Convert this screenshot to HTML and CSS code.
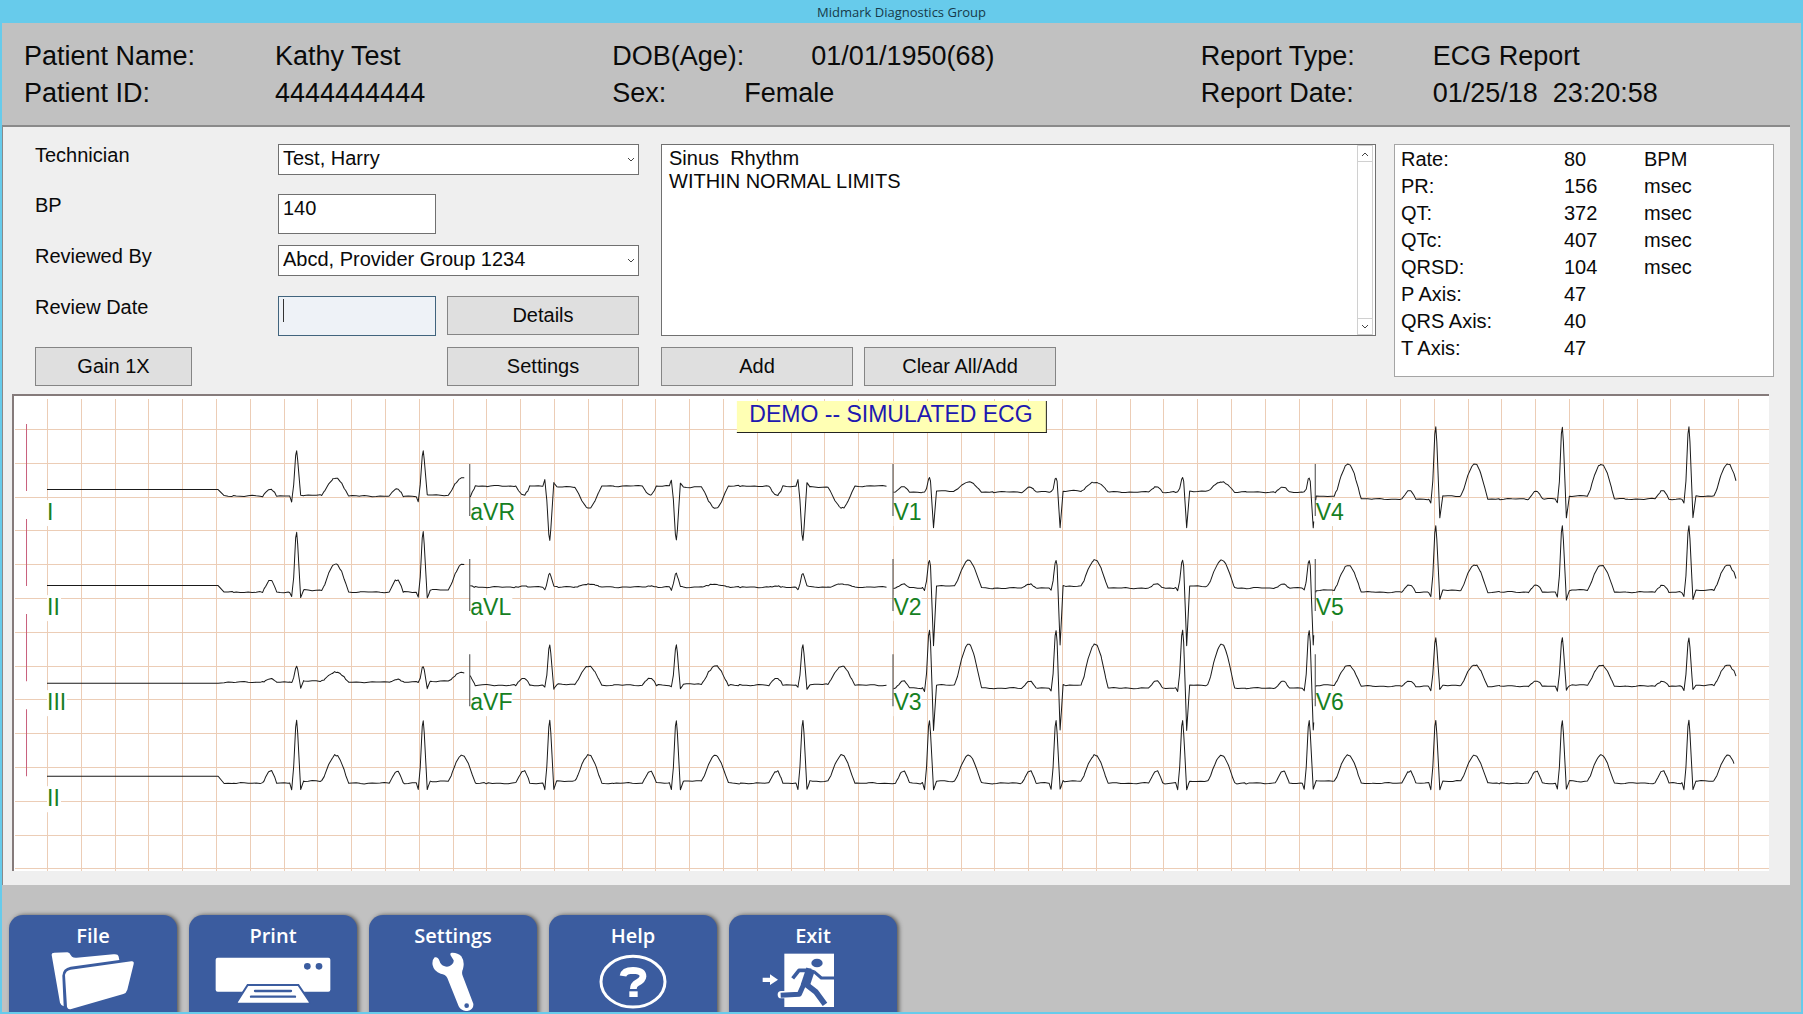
FILE: index.html
```html
<!DOCTYPE html>
<html lang="en">
<head>
  <meta charset="UTF-8">
  <meta name="viewport" content="width=device-width, initial-scale=1.0">
  <title>Midmark Diagnostics Group</title>
  <link rel="stylesheet" href="styles.css">
</head>
<body>
  <div class="window">
    <div class="title-bar">Midmark Diagnostics Group</div>

    <header class="patient-bar">
      <dl class="patient-group">
        <div><dt>Patient Name:</dt><dd>Kathy Test</dd></div>
        <div><dt>Patient ID:</dt><dd>4444444444</dd></div>
      </dl>
      <dl class="patient-group">
        <div><dt class="dob">DOB(Age):</dt><dd>01/01/1950(68)</dd></div>
        <div><dt class="sex">Sex:</dt><dd>Female</dd></div>
      </dl>
      <dl class="patient-group">
        <div><dt class="report">Report Type:</dt><dd>ECG Report</dd></div>
        <div><dt class="report">Report Date:</dt><dd>01/25/18  23:20:58</dd></div>
      </dl>
    </header>

    <main class="panel">
      <div class="panel-top">
        <form class="review-form">
          <label for="technician">Technician</label>
          <div class="select-wrap">
            <select id="technician"><option>Test, Harry</option></select>
            <svg width="8" height="6" viewBox="0 0 8 6"><path d="M1 1l3 3 3-3"/></svg>
          </div>

          <label for="bp">BP</label>
          <div class="field-row"><input type="text" id="bp" value="140"></div>

          <label for="reviewer">Reviewed By</label>
          <div class="select-wrap">
            <select id="reviewer"><option>Abcd, Provider Group 1234</option></select>
            <svg width="8" height="6" viewBox="0 0 8 6"><path d="M1 1l3 3 3-3"/></svg>
          </div>

          <label for="review-date">Review Date</label>
          <div class="field-row active">
            <input type="text" id="review-date">
            <button type="button" class="btn">Details</button>
          </div>

          <button type="button" class="btn gain">Gain 1X</button>
          <div class="field-row end"><button type="button" class="btn">Settings</button></div>
        </form>

        <section class="statements">
          <div class="memo">
            <textarea aria-label="Interpretation">Sinus  Rhythm
WITHIN NORMAL LIMITS</textarea>
            <div class="scrollbar">
              <button type="button" aria-label="Scroll up"><svg width="8" height="6" viewBox="0 0 8 6"><path d="M1 5l3-3 3 3"/></svg></button>
              <button type="button" aria-label="Scroll down"><svg width="8" height="6" viewBox="0 0 8 6"><path d="M1 1l3 3 3-3"/></svg></button>
            </div>
          </div>
          <div class="statement-buttons">
            <button type="button" class="btn">Add</button>
            <button type="button" class="btn">Clear All/Add</button>
          </div>
        </section>

        <div class="stats">
          <table>
            <tr><th scope="row">Rate:</th><td>80</td><td>BPM</td></tr>
            <tr><th scope="row">PR:</th><td>156</td><td>msec</td></tr>
            <tr><th scope="row">QT:</th><td>372</td><td>msec</td></tr>
            <tr><th scope="row">QTc:</th><td>407</td><td>msec</td></tr>
            <tr><th scope="row">QRSD:</th><td>104</td><td>msec</td></tr>
            <tr><th scope="row">P Axis:</th><td>47</td><td></td></tr>
            <tr><th scope="row">QRS Axis:</th><td>40</td><td></td></tr>
            <tr><th scope="row">T Axis:</th><td>47</td><td></td></tr>
          </table>
        </div>
      </div>

      <div class="chart">
        <svg id="ecg" viewBox="0 0 1754 475"></svg>
        <div class="demo-badge">DEMO -- SIMULATED ECG</div>
      </div>
    </main>

    <nav class="toolbar">
      <button type="button" class="tile">
        <span>File</span>
        <svg width="86" height="60" viewBox="0 0 258 180">
          <path fill="#fff" d="M5 12Q5 5 13 5L52 4Q59 5 62 12L66 17Q71 21 80 20L190 10Q204 8 206 17L208 27 62 47Q38 52 37 74L41 166Q33 163 30 155Z"/>
          <path fill="#fff" d="M45 72Q47 59 62 56L244 31Q253 30 251 39L232 116Q229 126 220 129L64 174Q54 177 51 168Z"/>
        </svg>
      </button>
      <button type="button" class="tile">
        <span>Print</span>
        <svg width="116" height="60" viewBox="0 0 348 180">
          <rect x="2" y="20" width="344" height="102" rx="6" fill="#fff"/>
          <circle cx="277" cy="46" r="10" fill="#3b5c9f"/>
          <circle cx="312" cy="46" r="10" fill="#3b5c9f"/>
          <path fill="#fff" stroke="#3b5c9f" stroke-width="6" d="M98 102H250L284 152Q286 158 280 158H70Q64 158 66 152Z"/>
          <path stroke="#3b5c9f" stroke-width="7" stroke-linecap="round" d="M120 120H228M108 137H240"/>
        </svg>
      </button>
      <button type="button" class="tile">
        <span>Settings</span>
        <svg width="46" height="60" viewBox="90 122 138 180">
          <path fill="#fff" d="M104 141Q95 150 98 165 102 184 122 190 136 191 142 203L176 288Q184 303 202 302 222 298 220 280L188 196Q184 186 189 176 195 154 184 138 173 126 155 127 148 128 153 137L161 150Q162 158 154 164 144 172 132 167 121 163 119 153 114 138 104 141Z"/>
          <circle cx="200" cy="286" r="7" fill="#3b5c9f"/>
        </svg>
      </button>
      <button type="button" class="tile">
        <span>Help</span>
        <svg width="68" height="60" viewBox="0 0 204 180">
          <ellipse cx="102" cy="92" rx="96" ry="76" fill="none" stroke="#fff" stroke-width="9"/>
          <path fill="none" stroke="#fff" stroke-width="20" d="M72 75Q75 58 102 58 132 59 132 76 131 87 115 95 103 102 103 114"/>
          <rect x="91" y="121" width="25" height="17" fill="#fff"/>
        </svg>
      </button>
      <button type="button" class="tile">
        <span>Exit</span>
        <svg width="102" height="60" viewBox="0 0 306 180">
          <path fill="#fff" d="M2 80H24V70L48 86 24 102V93H2Z"/>
          <rect x="67" y="8" width="149" height="160" fill="#fff"/>
          <g fill="none" stroke-linejoin="round">
            <path stroke="#fff" stroke-width="22" stroke-linecap="round" d="M58 131H74"/>
            <g stroke="#3b5c9f">
              <path stroke-width="11" d="M92 82L111 58H148"/>
              <path stroke-width="27" d="M146 54L129 105"/>
              <path stroke-width="15" d="M126 98L112 130 56 133"/>
              <path stroke-width="17" d="M130 98L161 122 189 160"/>
              <path stroke-width="9" d="M156 62L178 81H217"/>
            </g>
          </g>
          <ellipse cx="165" cy="36" rx="17" ry="13" fill="#3b5c9f"/>
        </svg>
      </button>
    </nav>
  </div>
  <script src="ecg.js"></script>
</body>
</html>
```
FILE: styles.css
```css
* {
  box-sizing: border-box;
}

body {
  margin: 0;
  font-family: "Liberation Sans", Arial, sans-serif;
  font-size: 20px;
  line-height: 23px;
  color: #0a0a0a;
}

button,
input,
select,
textarea {
  font: inherit;
  color: inherit;
}

.window {
  display: flex;
  flex-direction: column;
  height: 100vh;
  overflow: hidden;
  background: #c1c1c1;
  border: 2px solid #67cbeb;
  border-top: none;
}

.title-bar {
  flex: none;
  height: 23px;
  background: #67cbeb;
  font-family: "Open Sans", "Noto Sans", sans-serif;
  font-size: 13px;
  line-height: 24px;
  text-align: center;
  color: #163a4a;
}

/* patient header */
.patient-bar {
  flex: none;
  display: grid;
  grid-template-columns: repeat(3, 1fr);
  padding: 15px 12px 13px 22px;
  font-size: 27px;
  line-height: 37px;
}

.patient-group {
  margin: 0;
}

.patient-group div {
  display: flex;
}

.patient-group dt {
  width: 251px;
}

.patient-group dt.dob {
  width: 199px;
}

.patient-group dt.sex {
  width: 132px;
}

.patient-group dt.report {
  width: 232px;
}

.patient-group dd {
  margin: 0;
  white-space: pre;
}

/* main panel */
.panel {
  flex: none;
  margin-right: 11px;
  padding-bottom: 14px;
  background: #efefef;
  border-top: 2px solid #8a8a8a;
  border-left: 1px solid #8a8a8a;
}

.panel-top {
  display: grid;
  grid-template-columns: 604px 1fr 380px;
  align-items: start;
  padding: 17px 16px 0 32px;
}

.review-form {
  display: grid;
  grid-template-columns: 243px 1fr;
  grid-template-rows: 50px 51px 51px 51px 47px;
  align-items: start;
}

.select-wrap {
  position: relative;
}

.select-wrap select {
  display: block;
  width: 100%;
  height: 31px;
  padding: 0 4px 3px;
  appearance: none;
  background: #fff;
  border: 1px solid #707070;
  border-radius: 0;
}

.select-wrap svg {
  position: absolute;
  right: 4px;
  top: 13px;
  pointer-events: none;
}

.select-wrap path,
.scrollbar path {
  fill: none;
  stroke: #444;
}

.field-row {
  position: relative;
  display: flex;
  justify-content: space-between;
}

.field-row.end {
  justify-content: flex-end;
}

.field-row input {
  width: 158px;
  height: 40px;
  padding: 0 4px 12px;
  background: #fff;
  border: 1px solid #707070;
}

.field-row.active input {
  background: #eef2f7;
  border-color: #41647d;
}

/* text cursor of the active field */
.field-row.active::before {
  content: "";
  position: absolute;
  left: 5px;
  top: 3px;
  width: 1px;
  height: 23px;
  background: #333;
}

.btn {
  width: 192px;
  height: 39px;
  padding: 0;
  background: #dfdfdf;
  border: 1px solid #858585;
}

.btn.gain {
  width: 157px;
}

.statements {
  margin: 0 18px 0 22px;
}

.memo {
  display: flex;
  height: 192px;
  background: #fff;
  border: 1px solid #707070;
}

.memo textarea {
  flex: 1;
  padding: 2px 7px;
  background: transparent;
  border: none;
  resize: none;
  overflow: hidden;
}

.scrollbar {
  display: flex;
  flex-direction: column;
  justify-content: space-between;
  width: 16px;
  margin-right: 2px;
  border: 1px solid #d0d0d0;
  border-width: 0 1px;
}

.scrollbar button {
  display: flex;
  align-items: center;
  justify-content: center;
  height: 17px;
  padding: 0;
  background: #fff;
  border: 1px solid #d0d0d0;
  border-width: 1px 0;
}

.statement-buttons {
  display: flex;
  gap: 11px;
  margin-top: 11px;
}

.stats {
  height: 233px;
  padding: 1px 6px;
  background: #fff;
  border: 1px solid #a5a5a5;
}

.stats table {
  border-collapse: collapse;
  line-height: 27px;
}

.stats th,
.stats td {
  height: 27px;
  padding: 0;
  font-weight: normal;
  text-align: left;
}

.stats th {
  width: 163px;
}

.stats td {
  width: 80px;
}

/* ecg strip */
.chart {
  position: relative;
  margin: 0 21px 0 9px;
  background: #fff;
  border-top: 2px solid #857b7b;
  border-left: 2px solid #857b7b;
}

.chart svg {
  display: block;
  width: 100%;
}

.chart .grid {
  stroke: #eccdb6;
  shape-rendering: crispEdges;
}

.chart .calibration {
  stroke: #c9607c;
}

.chart .divider {
  stroke: #444;
}

.chart .trace {
  fill: none;
  stroke: #1a1a1a;
  stroke-linejoin: round;
}

.chart text {
  font-size: 23px;
  fill: #168022;
}

.demo-badge {
  position: absolute;
  left: 50%;
  top: 5px;
  transform: translateX(-50%);
  padding: 2px 13px 6px;
  background: #ffffb4;
  border-right: 1px solid #222;
  border-bottom: 1px solid #222;
  font-size: 23px;
  white-space: nowrap;
  color: #2018b0;
}

/* bottom toolbar */
.toolbar {
  flex: 1;
  display: flex;
  gap: 12px;
  min-height: 0;
  padding: 30px 7px 0;
  overflow: hidden;
}

.tile {
  flex: none;
  display: flex;
  flex-direction: column;
  align-items: center;
  width: 168px;
  height: 120px;
  padding: 9px 0 0;
  background: #3b5c9f;
  border: none;
  border-radius: 14px;
  box-shadow: 2px 0 4px #555;
  font-family: "Open Sans", "Noto Sans", sans-serif;
  font-size: 20px;
  font-weight: 600;
  color: #fff;
}

.tile svg {
  flex: none;
  margin-top: 4px;
}
```
FILE: ecg.js
```js
const svg = document.getElementById('ecg');
const W = 1754;
const H = 475;

const BEATS = [];
for (let i = 0; i < 12; i++) {
  BEATS.push(282.5 + i * 126.5);
}

// one entry per lead: where it sits, and wave heights above its baseline
const LEADS = [
  { name: 'I',   x: 33,   y: 124, base: 100, from: 204,  to: 453,  flat: 93.5,  w: 8,  p: 7,  q: -6, r: 45,  s: 1,   st: 1,  t: 17 },
  { name: 'II',  x: 33,   y: 219, base: 196, from: 204,  to: 453,  flat: 189.5, w: 14, p: 12, q: -5, r: 60,  s: -6,  st: 2,  t: 26 },
  { name: 'III', x: 33,   y: 314, base: 286, from: 204,  to: 453,  flat: 287, w: 20, p: 3,  q: 0,  r: 16,  s: -6,  st: 1,  t: 9 },
  { name: 'II',  x: 33,   y: 410, base: 387, from: 204,  to: 1721, flat: 380, w: 14, p: 12, q: -6, r: 63,  s: -6,  st: 2,  t: 26 },
  { name: 'aVR', x: 456,  y: 124, base: 90,  from: 456,  to: 875,  w: 46, p: -9, q: 6,  r: -54, s: 3,   st: -1, t: -21, divider: true },
  { name: 'aVL', x: 456,  y: 219, base: 191, from: 456,  to: 875,  w: 42, p: 1,  q: -3, r: 14,  s: 1,   st: 0,  t: 3, divider: true },
  { name: 'aVF', x: 456,  y: 314, base: 289, from: 456,  to: 875,  w: 42, p: 7,  q: -2, r: 40,  s: -4,  st: 1,  t: 18, divider: true },
  { name: 'V1',  x: 879,  y: 124, base: 96,  from: 879,  to: 1299, w: 28, p: 5,  q: 0,  r: 14,  s: -36, st: 1,  t: 9, divider: true },
  { name: 'V2',  x: 879,  y: 219, base: 192, from: 879,  to: 1299, w: 28, p: 4,  q: -2, r: 28,  s: -57, st: 2,  t: 26, divider: true },
  { name: 'V3',  x: 879,  y: 314, base: 292, from: 879,  to: 1299, w: 28, p: 7,  q: -3, r: 58,  s: -42, st: 3,  t: 41, divider: true },
  { name: 'V4',  x: 1301, y: 124, base: 103, from: 1301, to: 1721, w: 28, p: 8,  q: -4, r: 72,  s: -19, st: 3,  t: 32, divider: true },
  { name: 'V5',  x: 1301, y: 219, base: 196, from: 1301, to: 1721, w: 28, p: 7,  q: -5, r: 66,  s: -8,  st: 2,  t: 25, divider: true },
  { name: 'V6',  x: 1301, y: 314, base: 290, from: 1301, to: 1721, w: 28, p: 5,  q: -5, r: 48,  s: -4,  st: 1,  t: 20, divider: true }
];

function draw(tag, attrs, text) {
  const el = document.createElementNS('http://www.w3.org/2000/svg', tag);
  for (const key in attrs) {
    el.setAttribute(key, attrs[key]);
  }
  if (text) {
    el.textContent = text;
  }
  svg.appendChild(el);
}

// offsets are from the R peak
function beat(l) {
  return [
    [-63, 0], [-34, 0], [-31, l.p * 0.5], [-28, l.p * 0.95], [-25, l.p], [-22, l.p * 0.5], [-20, 0],
    [-7, 0], [-5, l.q], [-3, l.r * 0.25], [-1, l.r * 0.9], [0, l.r], [1, l.r * 0.8],
    [4, l.s], [7, l.st], [25, l.st],
    [28, l.st + l.t * 0.22], [32, l.st + l.t * 0.65], [36, l.st + l.t * 0.93], [38, l.st + l.t],
    [41, l.st + l.t * 0.98], [45, l.st + l.t * 0.7], [49, l.st + l.t * 0.25], [52, 0], [63, 0]
  ];
}

function trace(l) {
  const knots = [];
  BEATS.forEach(r => beat(l).forEach(k => knots.push([r + k[0], k[1]])));

  const at = x => {
    for (let i = 1; i < knots.length; i++) {
      if (x <= knots[i][0]) {
        const a = knots[i - 1];
        const b = knots[i];
        return b[0] === a[0] ? b[1] : a[1] + (b[1] - a[1]) * (x - a[0]) / (b[0] - a[0]);
      }
    }
    return 0;
  };

  const start = l.flat ? l.from + 6 : l.from;
  const xs = knots.map(k => k[0]).filter(x => x > start && x < l.to);
  for (let x = start; x <= l.to; x += 4) {
    xs.push(x);
  }
  xs.sort((a, b) => a - b);

  const points = l.flat ? [[l.x, l.flat], [l.from, l.flat]] : [];
  xs.forEach(x => {
    // slight muscle noise
    const noise = Math.sin(x * 1.7 + l.base) * Math.sin(x * 0.31) * 0.7;
    points.push([x, l.base - at(x) + noise]);
  });
  return points.map(p => p[0].toFixed(1) + ',' + p[1].toFixed(1)).join(' ');
}

for (let i = 0; i <= 50; i++) {
  const x = Math.round(33 + i * 33.8) + 0.5;
  draw('line', { class: 'grid', x1: x, y1: 3, x2: x, y2: H });
}
for (let i = 0; i <= 13; i++) {
  const y = Math.round(33 + i * 33.8) + 0.5;
  draw('line', { class: 'grid', x1: 1, y1: y, x2: W, y2: y });
}

for (let i = 0; i < 4; i++) {
  const y = 28 + i * 95;
  draw('line', { class: 'calibration', x1: 12.5, y1: y, x2: 12.5, y2: y + 67 });
}

LEADS.forEach(l => draw('rect', { x: l.x, y: l.y - 20, width: l.w, height: 26, fill: '#fff' }));
LEADS.forEach(l => {
  if (l.divider) {
    draw('line', { class: 'divider', x1: l.x - 0.5, y1: l.y - 56, x2: l.x - 0.5, y2: l.y - 4 });
  }
  draw('polyline', { class: 'trace', points: trace(l) });
  draw('text', { x: l.x, y: l.y }, l.name);
});
```
